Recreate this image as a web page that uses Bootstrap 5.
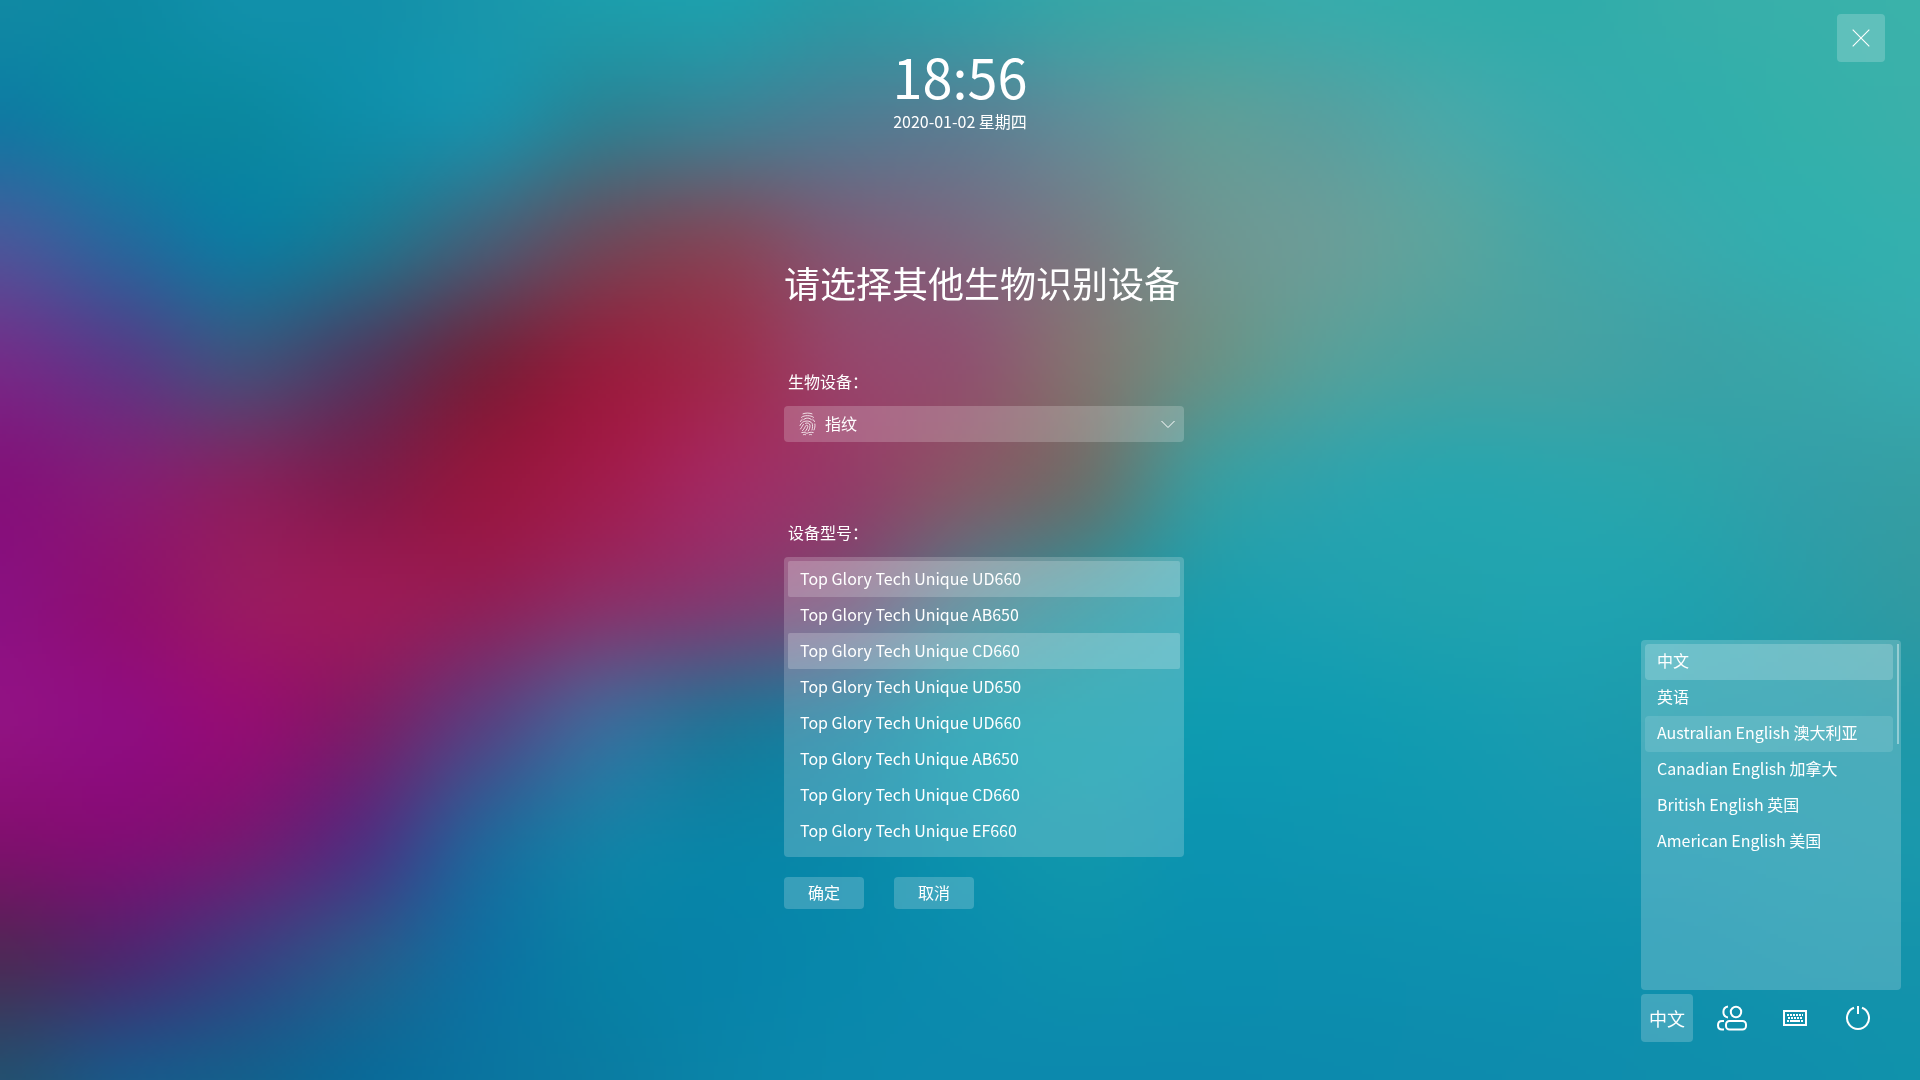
<!DOCTYPE html>
<html lang="zh-CN">
<head>
<meta charset="utf-8">
<meta name="viewport" content="width=device-width, initial-scale=1">
<title>生物识别设备</title>
<link href="https://cdn.jsdelivr.net/npm/bootstrap@5.3.0/dist/css/bootstrap.min.css" rel="stylesheet">
<style>
  body { font-family: "Noto Sans CJK SC", "Noto Sans", sans-serif; font-size: 16px; line-height: 24px; color: #fff; background: #0c8aad; }
  .wallpaper { z-index: -1; }
  .glass { background-color: rgba(255, 255, 255, .2); border: 0; border-radius: 4px; color: #fff; }
  .top-bar { display: grid; grid-template-columns: 1fr auto 1fr; padding: 14px 35px 0; }
  .clock-block { padding-top: 32px; }
  .clock-time { font-size: 54px; line-height: 60px; margin-bottom: 3px; }
  .icon-btn { width: 48px; height: 48px; padding: 0; color: #fff; line-height: 24px; border-radius: 4px; border: 0; }
  .icon-btn svg { display: block; margin: auto; }
  .device-form { width: 400px; margin-top: 125px; }
  .form-shift { padding-left: 48px; }
  .form-title { font-size: 36px; line-height: 48px; margin-bottom: 63px; font-weight: 400; white-space: nowrap; }
  .field-label { display: block; padding-left: 4px; margin-bottom: 13px; }
  .type-field { margin-bottom: 78px; }
  .type-select { height: 36px; padding: 0 36px 2px 41px; background-image: none; line-height: 24px; }
  .type-select:focus { color: #fff; background-color: rgba(255, 255, 255, .25); box-shadow: none; }
  .type-select option { color: #222; }
  .type-icon { left: 15px; top: 6px; pointer-events: none; }
  .type-chevron { right: 8px; top: 10px; pointer-events: none; }
  .option-box { padding: 4px; }
  .option-box button { height: 36px; padding: 5px 12px 7px; border: 0; background: transparent; color: #fff; border-radius: 2px; line-height: 24px; text-align: left; display: block; width: 100%; }
  .option-box button:hover { background: rgba(255, 255, 255, .12); }
  .model-box { min-height: 300px; }
  .option-box button.is-current { background: rgba(255, 255, 255, .2); }
  .model-box button.is-pointed { background: rgba(255, 255, 255, .22); }
  .form-actions { gap: 30px; margin-top: 20px; }
  .form-actions button { width: 80px; height: 32px; padding: 0 0 2px; }
  .bottom-bar { gap: 15px; padding: 0 38px 38px; }
  .lang-btn { width: 52px; font-size: 18px; }
  .lang-menu { width: 260px; height: 350px; left: 0; bottom: 52px; padding-right: 8px; }
  .option-box.lang-menu button { border-radius: 4px; padding: 4px 12px 8px; }
  .lang-menu button.is-pointed { background: rgba(255, 255, 255, .12); }
  .lang-thumb { top: 4px; right: 2px; width: 2px; height: 100px; background: rgba(255, 255, 255, .4); }
</style>
<script src="https://cdn.jsdelivr.net/npm/bootstrap@5.3.0/dist/js/bootstrap.bundle.min.js"></script>
</head>
<body class="min-vh-100 d-flex flex-column">
<canvas class="wallpaper position-fixed top-0 start-0 w-100 h-100" id="wallpaper" width="480" height="270" aria-hidden="true"></canvas>

<header class="top-bar">
  <span></span>
  <div class="clock-block text-center">
    <div class="clock-time">18:56</div>
    <div class="clock-date">2020-01-02 星期四</div>
  </div>
  <button type="button" class="btn icon-btn glass ms-auto" aria-label="关闭">
    <svg width="18" height="18" viewBox="0 0 18 18" fill="none" stroke="currentColor" stroke-width="1.1"><path d="M.7.7l16.600 16.600M17.300.7L.7 17.300"/></svg>
  </button>
</header>

<main class="form-shift d-flex justify-content-center">
  <form class="device-form">
    <h1 class="form-title">请选择其他生物识别设备</h1>
    <div class="type-field">
      <label class="field-label" for="device-type">生物设备：</label>
      <div class="position-relative">
        <select class="form-select type-select glass" id="device-type"><option selected>指纹</option></select>
        <svg class="type-icon position-absolute" width="17" height="24" viewBox="0 0 17 24" fill="none" stroke="#fff" stroke-opacity=".9" stroke-width=".9" stroke-linecap="round">
          <path d="M4 1.800C6.500 .8 10.500 .8 13 1.800M2.500 5.300C5 3 12 3 14.500 5.300M4.200 8C6 5.400 11 5.400 12.800 8M1.500 9.500C1.900 8.500 2.500 7.800 3.300 7.200M15.500 9.500C15.100 8.500 14.500 7.800 13.700 7.200M1 13.500C1.500 12.500 2.200 11 3.500 10.300C6 8.500 11 8.500 13 11.300C13.800 13 13.700 15.500 13 18M15.900 12C16.200 14 15.800 16.300 15 18M1.500 17C3 15 3.500 13.500 4.500 12.200M6.500 11.300C8.500 10.300 10.800 11.300 11 13.500C11.100 15.500 10.300 17.500 9.300 19M3.500 18.700C5.500 16.700 6 14.800 6.800 13.600C7.600 12.800 8.900 13.200 8.800 14.400C8.600 16 7.600 17.800 6.200 19.300M2.800 20.500C5 19.900 6.500 20.800 8 21.300C9.800 20.500 12 19.900 14.200 20.500M4.300 22.700C5 22.300 5.800 22.300 6.600 22.700M10.300 22.700C11 22.300 12 22.300 12.700 22.700"/>
        </svg>
        <svg class="type-chevron position-absolute" width="16" height="16" viewBox="0 0 16 16" fill="none" stroke="#fff" stroke-width="1"><path d="M1.500 5L8 11.500L14.500 5"/></svg>
      </div>
    </div>
    <span class="field-label" id="model-label">设备型号：</span>
    <div class="option-box model-box glass" role="listbox" aria-labelledby="model-label">
      <button type="button" role="option" aria-selected="true" class="is-current">Top Glory Tech Unique UD660</button>
      <button type="button" role="option">Top Glory Tech Unique AB650</button>
      <button type="button" role="option" class="is-pointed">Top Glory Tech Unique CD660</button>
      <button type="button" role="option">Top Glory Tech Unique UD650</button>
      <button type="button" role="option">Top Glory Tech Unique UD660</button>
      <button type="button" role="option">Top Glory Tech Unique AB650</button>
      <button type="button" role="option">Top Glory Tech Unique CD660</button>
      <button type="button" role="option">Top Glory Tech Unique EF660</button>
    </div>
    <div class="form-actions d-flex">
      <button type="submit" class="btn glass">确定</button>
      <button type="button" class="btn glass">取消</button>
    </div>
  </form>
</main>

<footer class="bottom-bar d-flex justify-content-end mt-auto">
  <div class="position-relative">
    <button type="button" class="btn icon-btn lang-btn glass" aria-expanded="true">中文</button>
    <div class="option-box lang-menu glass position-absolute" role="listbox" aria-label="语言">
      <button type="button" role="option" aria-selected="true" class="is-current">中文</button>
      <button type="button" role="option">英语</button>
      <button type="button" role="option" class="is-pointed">Australian English 澳大利亚</button>
      <button type="button" role="option">Canadian English 加拿大</button>
      <button type="button" role="option">British English 英国</button>
      <button type="button" role="option">American English 美国</button>
      <span class="lang-thumb position-absolute"></span>
    </div>
  </div>
  <button type="button" class="btn icon-btn" aria-label="切换用户">
    <svg width="32" height="28" viewBox="0 0 32 28" fill="none" stroke="currentColor" stroke-width="2"><circle cx="20" cy="8" r="5.200"/><path d="M12 2.600C9.300 3 7.400 5 7.400 8S9.300 13 12 13.400"/><rect x="10" y="17" width="20" height="8.500" rx="3.500"/><path d="M8 17H6C3.500 17 2 18.700 2 21.200S3.500 25.500 6 25.500H8"/></svg>
  </button>
  <button type="button" class="btn icon-btn" aria-label="屏幕键盘">
    <svg width="24" height="16" viewBox="0 0 24 16" fill="none" stroke="currentColor"><rect x="1" y="1" width="22" height="14" stroke-width="2"/><path d="M4 5h16" stroke-width="2" stroke-dasharray="2 1"/><path d="M5 8h14" stroke-width="2" stroke-dasharray="2 1"/><path d="M4 11h2M7 11h10M18 11h2" stroke-width="2"/></svg>
  </button>
  <button type="button" class="btn icon-btn" aria-label="电源">
    <svg width="26" height="26" viewBox="0 0 26 26" fill="none" stroke="currentColor" stroke-width="2"><path d="M9 2.700A11 11 0 1 0 17 2.700M13 1v8"/></svg>
  </button>
</footer>

<script>
  // Wallpaper: a coarse colour mesh, smoothly interpolated over the window.
  const mesh = [
    "1089a3 0d8aa3 1190aa 1290aa 1896ab 1c9dab 1f9fac 2a9aa5 2f9fa8 38a5a6 3aa8a6 39abab 33acaa 30acaa 36aeaa 38b0aa 3ab2aa",
    "1279a2 0b85a0 0b88a0 0f8da8 1b8fa8 2f8092 3f7f92 4f7c92 5a7f93 5f8e98 5f9d98 58a09f 4aa8a8 3aaaac 32adac 34b0aa 3ab0aa",
    "48589a 27689c 0f7a9f 1f7590 455f78 6c4a5c 81485b 7f5a75 7c687f 787c84 6f9490 6a9d98 5aa49e 45a6a6 3aaaac 32aeae 34b0ae",
    "722d88 5a3a86 42507c 503a60 72243f 941f3e 9c2c4c 96456a 8f5270 827472 6b9085 589f99 4aa2a0 45a2a3 3ca2a6 38a6a8 36aaae",
    "83127a 841d74 85225f 801c4c 94173f a01c4c a12a62 943c68 855868 6a716e 3d9a9c 30a2ab 28a5ae 2aa5ad 2ca4aa 329fa8 359fa4",
    "8a1080 8f1070 981a62 9a1a58 902058 8a3068 803c72 6f5078 4a7a8c 2c8f9a 1d9cac 1ea0b0 20a2ae 20a3b0 20a1ae 289da8 309aa2",
    "911282 8f0d80 930e72 7d1e68 5a4080 406898 257396 1b7f9f 1094a8 0f9cab 0f9bb0 109bb1 149cb0 1a9caf 1c9aac 1d99aa 2098a8",
    "80106e 800f74 741a72 503080 246499 1580a5 0a84a6 0a88a8 0c92ac 1097ac 0c94b0 0e95b0 1096b0 1496b0 1696af 1897ad 1a98ac",
    "4d2a58 4b2a70 3a3f80 275a8c 0f70a0 0880a4 0783a9 0888ab 0b8cad 0c90ac 0b8fae 0c8fae 0d90ae 0e91ae 1091ad 1293ac 1493ab",
    "235070 1a5888 14608c 0a6a98 0a749f 0a7ca2 0a84a8 0b88ac 0c89ad 0c89ad 0c89ad 0c8aad 0d8bad 0e8cad 0f8eac 108fac 1092ab"
  ].map(r => r.split(" ").map(c => [0, 2, 4].map(i => parseInt(c.substr(i, 2), 16))));
  const spline = (a, b, c, d, t) => b + .5 * t * (c - a + t * (2 * a - 5 * b + 4 * c - d + t * (3 * (b - c) + d - a)));
  const at = (r, c) => mesh[Math.max(0, Math.min(mesh.length - 1, r))][Math.max(0, Math.min(mesh[0].length - 1, c))];
  const cv = document.getElementById("wallpaper"), ctx = cv.getContext("2d");
  const img = ctx.createImageData(cv.width, cv.height);
  for (let y = 0; y < cv.height; y++) {
    const v = y / cv.height * (mesh.length - 1), r = Math.floor(v), tv = v - r;
    for (let x = 0; x < cv.width; x++) {
      const u = x / cv.width * (mesh[0].length - 1), c = Math.floor(u), tu = u - c, o = 4 * (y * cv.width + x);
      for (let k = 0; k < 3; k++) {
        const p = [-1, 0, 1, 2].map(j => spline(at(r + j, c - 1)[k], at(r + j, c)[k], at(r + j, c + 1)[k], at(r + j, c + 2)[k], tu));
        img.data[o + k] = spline(p[0], p[1], p[2], p[3], tv);
      }
      img.data[o + 3] = 255;
    }
  }
  ctx.putImageData(img, 0, 0);
</script>
</body>
</html>
